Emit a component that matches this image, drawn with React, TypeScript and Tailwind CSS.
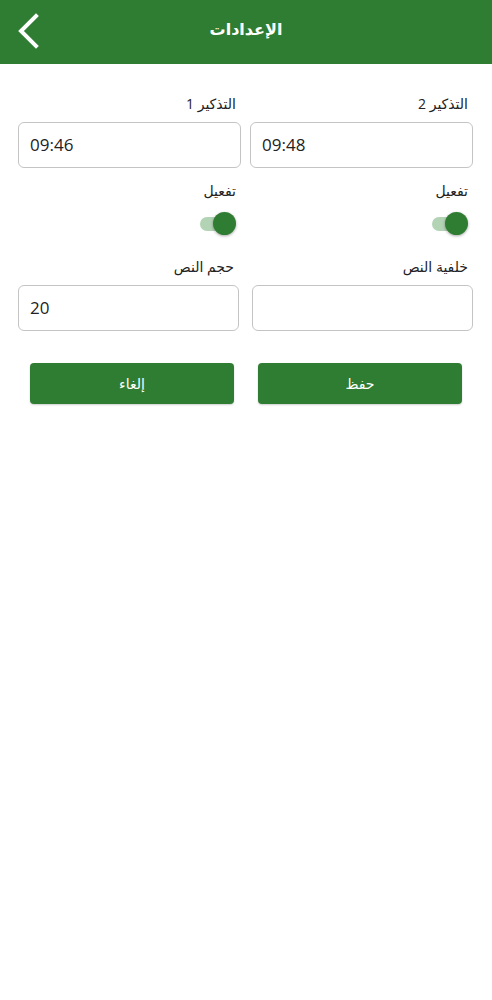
import React from "react";

const font = { fontFamily: '"Open Sans", "DejaVu Sans", sans-serif' };

function Switch() {
  return (
    <div className="mr-[8px] flex h-[26px] w-[38px] items-center">
      <div className="relative h-[14px] w-[33px] rounded-full bg-[#b3d3b5]">
        <span className="absolute -right-[3px] -top-[5px] h-[23px] w-[23px] rounded-full bg-[#2e7d32] shadow-[0_1px_3px_rgba(0,0,0,0.35)]" />
      </div>
    </div>
  );
}

function Field({ label, value }: { label: string; value: string }) {
  return (
    <div className="flex flex-col">
      <div className="h-[22px] pr-[5px] text-[14px] leading-[22px] text-[#222]">{label}</div>
      <div
        dir="ltr"
        className="mt-[7px] flex h-[46px] items-center rounded-[6px] border border-[#c4c4c4] bg-white px-[11px] text-[17px] text-[#222]"
      >
        {value}
      </div>
    </div>
  );
}

function Toggle() {
  return (
    <div className="flex flex-col items-start">
      <div className="h-[22px] pr-[5px] text-[14px] leading-[22px] text-[#222]">تفعيل</div>
      <div className="mt-[9px]">
        <Switch />
      </div>
    </div>
  );
}

export default function App() {
  return (
    <div dir="rtl" className="min-h-[1000px] w-full bg-white" style={font}>
      <header className="relative flex h-[64px] items-center justify-center bg-[#2e7d32] pb-[6px]">
        <span className="text-[16px] font-bold text-white">الإعدادات</span>
        <svg
          className="absolute left-[14px] top-[12px]"
          width="28"
          height="38"
          viewBox="0 0 28 38"
          fill="none"
          stroke="white"
          strokeWidth="4"
          strokeLinecap="square"
        >
          <path d="M22 4 L7 19 L22 34" />
        </svg>
      </header>

      <div className="px-[19px] pl-[18px] pt-[29px]">
        <div className="grid grid-cols-2 gap-x-[9px]">
          <Field label="التذكير 2" value="09:48" />
          <Field label="التذكير 1" value="09:46" />
        </div>

        <div className="mt-[12px] grid grid-cols-2 gap-x-[9px]">
          <Toggle />
          <Toggle />
        </div>

        <div className="mt-[19px] grid grid-cols-2 gap-x-[13px]">
          <Field label="خلفية النص" value="" />
          <Field label="حجم النص" value="20" />
        </div>
      </div>

      <div className="mt-[32px] grid grid-cols-2 gap-x-[24px] px-[30px]">
        <button className="h-[41px] rounded-[4px] bg-[#2e7d32] text-[14px] text-white shadow-[0_1px_2px_rgba(0,0,0,0.2)]">
          حفظ
        </button>
        <button className="h-[41px] rounded-[4px] bg-[#2e7d32] text-[14px] text-white shadow-[0_1px_2px_rgba(0,0,0,0.2)]">
          إلغاء
        </button>
      </div>
    </div>
  );
}
